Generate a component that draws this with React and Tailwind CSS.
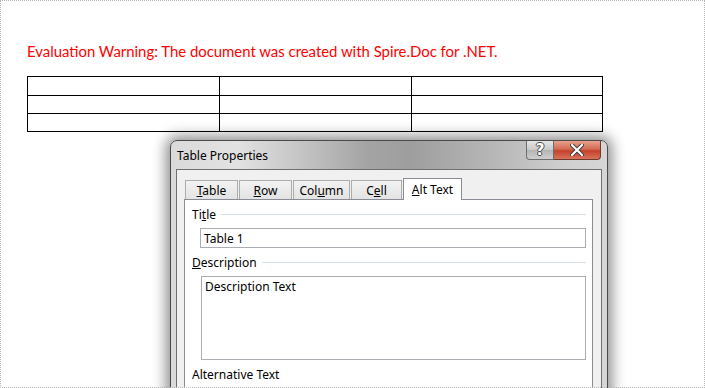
import React from "react";

const ui = { fontFamily: '"Noto Sans", "Open Sans", sans-serif' };

function Tab({ children, w, selected }) {
  if (selected) {
    return (
      <div
        className={`relative z-10 -mb-px flex h-[22px] items-center justify-center border border-b-0 border-[#898c95] bg-white text-[12px] leading-[15px] text-black ${w}`}
      >
        {children}
      </div>
    );
  }
  return (
    <div
      className={`mt-[2px] flex h-[19px] items-center justify-center border border-b-0 border-[#acacac] bg-[linear-gradient(#f2f2f2,#e3e3e3)] text-[12px] leading-[15px] text-black ${w}`}
    >
      {children}
    </div>
  );
}

function Section({ children }) {
  return (
    <div className="flex items-center gap-[5px] text-[12px] leading-[15px] text-black">
      <span className="whitespace-nowrap">{children}</span>
      <div className="h-px flex-1 bg-[#d5dfe5]" />
    </div>
  );
}

export default function App() {
  return (
    <div className="relative h-[388px] w-[705px] overflow-hidden bg-white">
      {/* document */}
      <div className="pl-[27px] pt-[42px]">
        <div
          className="text-[14.9px] leading-[18px] text-[#ff0000]"
          style={{ fontFamily: '"Lato", "Open Sans", sans-serif' }}
        >
          Evaluation Warning: The document was created with Spire.Doc for .NET.
        </div>
        <table className="mt-[16px] w-[576px] border-collapse">
          <tbody>
            {[0, 1, 2].map((r) => (
              <tr key={r} className={r === 0 ? "h-[19px]" : "h-[18px]"}>
                <td className="w-[192px] border border-black p-0" />
                <td className="w-[192px] border border-black p-0" />
                <td className="border border-black p-0" />
              </tr>
            ))}
          </tbody>
        </table>
      </div>

      {/* dialog window */}
      <div
        className="absolute left-[170px] top-[140px] flex h-[270px] w-[438px] flex-col rounded-t-[7px] border border-[#4a4a4a] bg-[linear-gradient(to_right,#dadada_0%,#e2e2e2_15%,#c4c4c4_30%,#a4a4a4_45%,#9e9e9e_55%,#b8b8b8_75%,#cfcfcf_90%,#d6d6d6_100%)] shadow-[0_0_14px_4px_rgba(0,0,0,0.45)]"
        style={ui}
      >
        <div className="relative flex h-[28px] shrink-0 items-center pl-[6px]">
          <span className="pt-[2px] text-[12px] text-black">Table Properties</span>
          <div className="absolute right-[6px] top-0 flex h-[19px]">
            <div className="flex w-[28px] items-center justify-center rounded-bl-[4px] border border-t-0 border-[#6d6d6d] bg-[linear-gradient(#e6e6e6,#c9c9c9_50%,#b4b4b4_51%,#cfcfcf)]">
              <span
                className="text-[15px] font-bold leading-none text-white"
                style={{
                  fontFamily: '"DejaVu Sans", sans-serif',
                  textShadow:
                    "1px 0 0 #4a4a4a, -1px 0 0 #4a4a4a, 0 1px 0 #4a4a4a, 0 -1px 0 #4a4a4a",
                }}
              >
                ?
              </span>
            </div>
            <div className="flex w-[47px] items-center justify-center rounded-br-[4px] border border-l-0 border-t-0 border-[#6d3a30] bg-[linear-gradient(#e8a18f,#d46a52_45%,#c4412a_55%,#d9735c)]">
              <svg width="14" height="12" viewBox="0 0 14 12">
                <path
                  d="M2 1 L12 11 M12 1 L2 11"
                  stroke="#3b3b3b"
                  strokeWidth="4"
                  strokeLinecap="round"
                />
                <path
                  d="M2 1 L12 11 M12 1 L2 11"
                  stroke="#ffffff"
                  strokeWidth="2.2"
                  strokeLinecap="round"
                />
              </svg>
            </div>
          </div>
        </div>
        <div className="mx-[5px] flex flex-1 flex-col border border-[#6f6f6f] bg-[#f0f0f0] pl-[7px] pr-[8px] pt-[8px]">
          <div className="flex items-end gap-px pl-px">
            <Tab w="w-[53px]">
              <span>
                <u>T</u>able
              </span>
            </Tab>
            <Tab w="w-[53px]">
              <span>
                <u>R</u>ow
              </span>
            </Tab>
            <Tab w="w-[57px]">
              <span>
                Col<u>u</u>mn
              </span>
            </Tab>
            <Tab w="w-[51px]">
              <span>
                C<u>e</u>ll
              </span>
            </Tab>
            <Tab w="w-[59px]" selected>
              <span>
                <u>A</u>lt Text
              </span>
            </Tab>
          </div>
          <div className="flex flex-1 flex-col border border-[#898c95] bg-white pl-[7px] pr-[6px] pt-[7px]">
            <Section>
              Ti<u>t</u>le
            </Section>
            <div className="ml-[8px] mt-[6px] flex h-[20px] items-center border border-[#abadb3] pl-[3px] text-[12px] leading-[15px] text-black">
              Table 1
            </div>
            <div className="mt-[7px]">
              <Section>
                <u>D</u>escription
              </Section>
            </div>
            <div className="ml-[9px] mt-[6px] h-[84px] border border-[#abadb3] pl-[3px] pt-[2px] text-[12px] leading-[15px] text-black">
              Description Text
            </div>
            <div className="mt-[7px] text-[12px] leading-[15px] text-black">Alternative Text</div>
          </div>
        </div>
      </div>

      {/* dotted page border */}
      <div className="pointer-events-none absolute inset-0 border border-dotted border-[#b4b4b4]" />
    </div>
  );
}
